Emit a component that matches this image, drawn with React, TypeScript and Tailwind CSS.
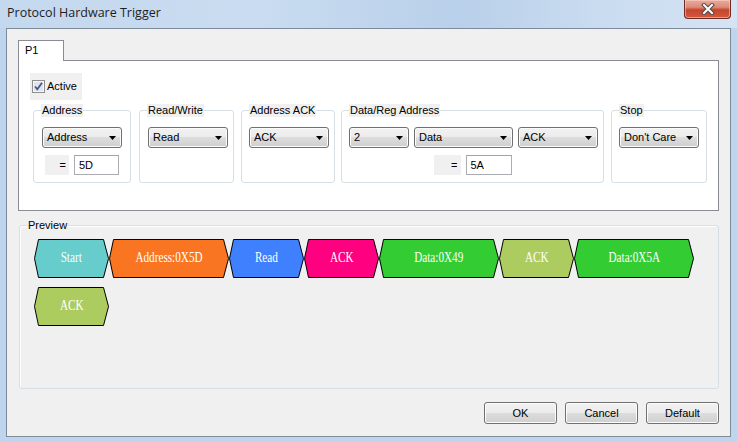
import React from "react";

const btnBg =
  "bg-[linear-gradient(#f2f2f2,#ebebeb_50%,#dddddd_50%,#cfcfcf)]";

function Select({ value, w }: { value: string; w: string }) {
  return (
    <div
      className={`${w} h-[21px] flex items-center justify-between pl-[4px] pr-[5px] rounded-[3px] border border-[#707070] ${btnBg} shadow-[inset_0_0_0_1px_#fbfbfb] text-[11px] leading-[13px] text-black`}
    >
      <span>{value}</span>
      <svg width="7" height="4" viewBox="0 0 7 4">
        <path d="M0 0H7L3.5 4Z" fill="#000" />
      </svg>
    </div>
  );
}

function EqField({ value, eqW, boxW }: { value: string; eqW: string; boxW: string }) {
  return (
    <div className="flex justify-center gap-[5px] mt-[7px]">
      <div
        className={`${eqW} h-[20px] bg-[#f0f0f0] flex items-center justify-end pr-[3px] text-[11px] leading-[13px]`}
      >
        =
      </div>
      <div
        className={`${boxW} h-[20px] border border-[#abadb3] border-t-[#a0a3a9] bg-white flex items-center pl-[4px] text-[11px] leading-[13px]`}
      >
        {value}
      </div>
    </div>
  );
}

function Group({
  label,
  className,
  children,
}: {
  label: string;
  className: string;
  children?: React.ReactNode;
}) {
  return (
    <div className={`relative h-[73px] rounded-[3px] border border-[#d5dfe5] pt-[16px] ${className}`}>
      <span className="absolute left-[7px] -top-[7px] bg-[#f0f0f0] px-[1px] leading-[13px] text-[11px]">
        {label}
      </span>
      {children}
    </div>
  );
}

function Hex({ label, color, w, cls }: { label: string; color: string; w: number; cls: string }) {
  const h = 39;
  const pts = `0.5,19.5 4.5,0.5 ${w - 5.5},0.5 ${w - 0.5},19.5 ${w - 5.5},38.5 4.5,38.5`;
  return (
    <div className={`relative ${cls} h-[39px] flex items-center justify-center`}>
      <svg className="absolute inset-0" width={w} height={h} viewBox={`0 0 ${w} ${h}`}>
        <polygon points={pts} fill={color} stroke="#000" strokeWidth="1" />
      </svg>
      <span className="relative -mt-[2px] inline-block scale-x-[0.8] text-white text-[14px] leading-[16px] font-['Liberation_Serif','Times_New_Roman',serif] whitespace-nowrap">
        {label}
      </span>
    </div>
  );
}

function Button({ label }: { label: string }) {
  return (
    <div
      className={`w-[73px] h-[22px] rounded-[3px] border border-[#707070] ${btnBg} shadow-[inset_0_0_0_1px_#fcfcfc] flex items-center justify-center text-[11px] leading-[13px]`}
    >
      {label}
    </div>
  );
}

export default function App() {
  return (
    <div className="w-[737px] h-[442px] flex flex-col overflow-hidden bg-[#bfd5ee] font-['Liberation_Sans',Arial,sans-serif] text-black">
      {/* Title bar */}
      <div className="h-[28px] flex items-start justify-between bg-[linear-gradient(90deg,#c4d8ee,#c9dcf0_35%,#b9d0ea_62%,#c8dbef_80%,#d5e4f4)]">
        <span className="pl-[7px] pt-[5px] text-[12.5px] leading-[16px] font-['Open_Sans','Noto_Sans',sans-serif] text-[#1e1e1e]">
          Protocol Hardware Trigger
        </span>
        <div className="mr-[6px] w-[47px] h-[19px] rounded-b-[4px] border border-t-0 border-[#6a2c24] bg-[linear-gradient(#e9aa9c,#dc8b78_40%,#c7442b_55%,#d25a3f)] shadow-[inset_0_0_0_1px_rgba(255,220,210,0.5)] flex items-center justify-center">
          <svg width="14" height="12" viewBox="0 0 14 12">
            <path d="M3 2L11 10M11 2L3 10" stroke="#4a4a4a" strokeWidth="4" strokeLinecap="square" />
            <path d="M3 2L11 10M11 2L3 10" stroke="#ffffff" strokeWidth="2" strokeLinecap="square" />
          </svg>
        </div>
      </div>

      {/* Client */}
      <div className="px-[6px]">
        <div className="w-[725px] h-[409px] border border-[#7d8a98] bg-[#f0f0f0] flex flex-col pt-[11px] px-[11px]">
          {/* Tab header */}
          <div className="flex h-[20px]">
            <div className="relative z-10 -mb-px w-[46px] h-[21px] border border-b-0 border-[#898c95] bg-white pl-[6px] pt-[3px] text-[11px] leading-[13px]">
              P1
            </div>
          </div>
          {/* Tab panel */}
          <div className="h-[151px] border border-[#898c95] bg-white flex flex-col">
            <div className="ml-[11px] mt-[12px] w-[52px] h-[27px] bg-[#f0f0f0] flex items-center pl-[2px] gap-[2px]">
              <svg width="13" height="13" viewBox="0 0 13 13">
                <rect x="0.5" y="0.5" width="12" height="12" fill="#f6f6f6" stroke="#8e8f8f" />
                <rect x="2" y="2" width="9" height="9" fill="#e4e4e4" />
                <path d="M3 6.5L5.3 9.3L10 2.8" stroke="#3c5a9b" strokeWidth="1.8" fill="none" />
              </svg>
              <span className="text-[11px] leading-[13px]">Active</span>
            </div>
            <div className="flex mt-[10px]">
              <Group label="Address" className="ml-[14px] w-[98px] pl-[8px]">
                <Select value="Address" w="w-[80px]" />
                <div className="-ml-[8px]">
                  <EqField value="5D" eqW="w-[24px]" boxW="w-[45px]" />
                </div>
              </Group>
              <Group label="Read/Write" className="ml-[8px] w-[95px] pl-[8px]">
                <Select value="Read" w="w-[80px]" />
              </Group>
              <Group label="Address ACK" className="ml-[7px] w-[94px] pl-[7px]">
                <Select value="ACK" w="w-[80px]" />
              </Group>
              <Group label="Data/Reg Address" className="ml-[6px] w-[263px] pl-[7px]">
                <div className="flex gap-[5px]">
                  <Select value="2" w="w-[60px]" />
                  <Select value="Data" w="w-[99px]" />
                  <Select value="ACK" w="w-[80px]" />
                </div>
                <div className="-ml-[7px]">
                  <EqField value="5A" eqW="w-[27px]" boxW="w-[46px]" />
                </div>
              </Group>
              <Group label="Stop" className="ml-[7px] w-[96px] pl-[7px]">
                <Select value="Don't Care" w="w-[80px]" />
              </Group>
            </div>
          </div>

          {/* Preview */}
          <div className="relative mt-[14px] ml-[1px] h-[164px] rounded-[3px] border border-[#d5dfe5] shadow-[inset_1px_1px_0_#ffffff] pt-[13px] pl-[14px]">
            <span className="absolute left-[7px] -top-[7px] bg-[#f0f0f0] px-[1px] leading-[13px] text-[11px]">
              Preview
            </span>
            <div className="flex flex-wrap gap-y-[9px] w-[683px]">
              <Hex label="Start" color="#66cccc" w={75} cls="w-[75px]" />
              <Hex label="Address:0X5D" color="#f97521" w={120} cls="w-[120px]" />
              <Hex label="Read" color="#3f80ff" w={75} cls="w-[75px]" />
              <Hex label="ACK" color="#ff0080" w={75} cls="w-[75px]" />
              <Hex label="Data:0X49" color="#33cc33" w={120} cls="w-[120px]" />
              <Hex label="ACK" color="#accc60" w={75} cls="w-[75px]" />
              <Hex label="Data:0X5A" color="#33cc33" w={120} cls="w-[120px]" />
              <Hex label="ACK" color="#accc60" w={75} cls="w-[75px]" />
            </div>
          </div>

          {/* Buttons */}
          <div className="mt-[13px] flex justify-end gap-[8px]">
            <Button label="OK" />
            <Button label="Cancel" />
            <Button label="Default" />
          </div>
        </div>
      </div>
    </div>
  );
}
